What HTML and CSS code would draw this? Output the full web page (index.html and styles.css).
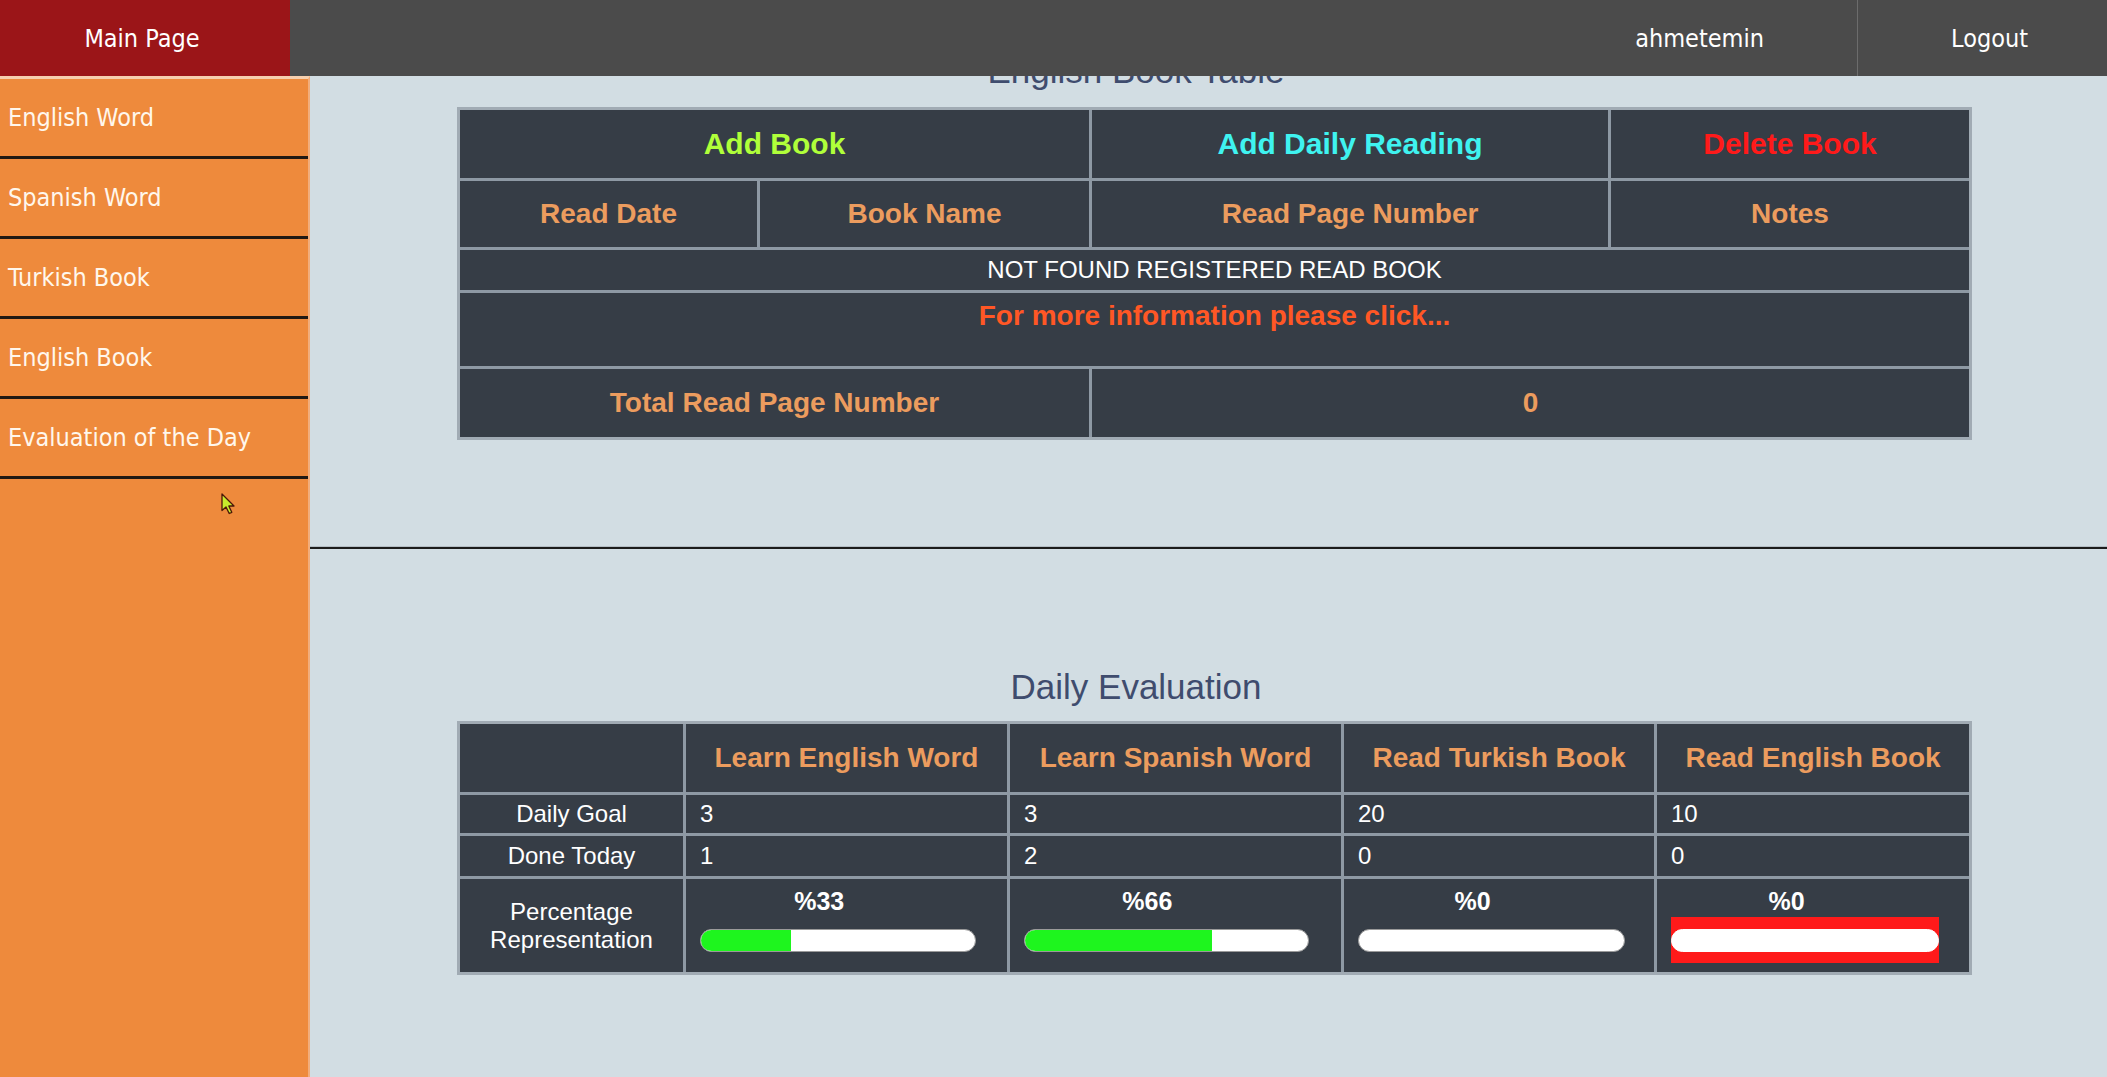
FILE: index.html
```html
<!DOCTYPE html>
<html lang="en">
<head>
<meta charset="utf-8">
<title>English Book Table</title>
<link rel="stylesheet" href="styles.css">
</head>
<body>
<div class="page">
  <header class="topbar">
    <a class="brand" href="#">Main Page</a>
    <div class="spacer"></div>
    <a class="nav-item" href="#">ahmetemin</a>
    <a class="nav-item logout" href="#">Logout</a>
  </header>
  <div class="layout">
    <nav class="sidebar">
      <a class="side-link" href="#">English Word</a>
      <a class="side-link" href="#">Spanish Word</a>
      <a class="side-link" href="#">Turkish Book</a>
      <a class="side-link" href="#">English Book</a>
      <a class="side-link" href="#">Evaluation of the Day</a>
      <svg class="cursor" width="15" height="22" viewBox="0 0 15 22"><path d="M1 1 L1 17.5 L5 14 L8.2 20.5 L10.8 19.3 L7.8 13 L13 13 Z" fill="#c6ec2c" stroke="#4a1808" stroke-width="1.3" stroke-linejoin="round"/></svg>
    </nav>
    <main class="content">
      <h2 class="section-title first">English Book Table</h2>
      <div class="book-table">
        <div class="cell span2 action add">Add Book</div>
        <div class="cell action daily">Add Daily Reading</div>
        <div class="cell action delete">Delete Book</div>
        <div class="cell head">Read Date</div>
        <div class="cell head">Book Name</div>
        <div class="cell head">Read Page Number</div>
        <div class="cell head">Notes</div>
        <div class="cell span4 empty">NOT FOUND REGISTERED READ BOOK</div>
        <div class="cell span4 info">For more information please click...</div>
        <div class="cell span2 head">Total Read Page Number</div>
        <div class="cell span2 head">0</div>
      </div>
      <div class="divider"></div>
      <h2 class="section-title second">Daily Evaluation</h2>
      <div class="eval-table">
        <div class="cell"></div>
        <div class="cell head">Learn English Word</div>
        <div class="cell head">Learn Spanish Word</div>
        <div class="cell head">Read Turkish Book</div>
        <div class="cell head">Read English Book</div>

        <div class="cell rowlabel">Daily Goal</div>
        <div class="cell val">3</div>
        <div class="cell val">3</div>
        <div class="cell val">20</div>
        <div class="cell val">10</div>

        <div class="cell rowlabel">Done Today</div>
        <div class="cell val">1</div>
        <div class="cell val">2</div>
        <div class="cell val">0</div>
        <div class="cell val">0</div>

        <div class="cell rowlabel">Percentage<br>Representation</div>
        <div class="cell pcell">
          <div class="pct">%33</div>
          <div class="meter"><div class="bar"><div class="fill" style="width:33%"></div></div></div>
        </div>
        <div class="cell pcell">
          <div class="pct">%66</div>
          <div class="meter"><div class="bar"><div class="fill" style="width:66%"></div></div></div>
        </div>
        <div class="cell pcell">
          <div class="pct">%0</div>
          <div class="meter"><div class="bar"><div class="fill" style="width:0%"></div></div></div>
        </div>
        <div class="cell pcell">
          <div class="pct">%0</div>
          <div class="meter alert"><div class="bar clean"><div class="fill" style="width:0%"></div></div></div>
        </div>
      </div>
    </main>
  </div>
</div>
</body>
</html>
```
FILE: styles.css
```css
* { box-sizing: border-box; }

html, body {
  margin: 0;
  height: 100%;
}

body {
  background: #d2dde3;
  font-family: "Liberation Sans", Arial, sans-serif;
  overflow: hidden;
}

.page {
  display: flex;
  flex-direction: column;
  height: 100vh;
}

/* ---------- top bar ---------- */
.topbar {
  flex: none;
  display: flex;
  height: 76px;
  background: #4b4b4b;
  font-family: "DejaVu Sans Condensed", "DejaVu Sans", sans-serif;
  font-size: 25px;
}

.brand {
  width: 290px;
  display: flex;
  align-items: center;
  justify-content: center;
  padding-right: 6px;
  background: #9b1518;
  color: #fff;
  text-decoration: none;
}

.spacer { flex: 1; }

.nav-item {
  display: flex;
  align-items: center;
  padding: 0 93px;
  color: #fff;
  text-decoration: none;
}

.nav-item.logout {
  border-left: 1px solid #6c6c6c;
  padding: 0 79px 0 93px;
}

/* ---------- body ---------- */
.layout {
  flex: 1;
  display: flex;
  min-height: 0;
}

.sidebar {
  position: relative;
  flex: none;
  width: 310px;
  background: #ee8a3c;
  border-top: 3px solid #f6cfae;
  border-right: 2px solid #f2ad7b;
  font-family: "DejaVu Sans Condensed", "DejaVu Sans", sans-serif;
}

.side-link {
  display: flex;
  align-items: center;
  height: 80px;
  padding-left: 8px;
  border-bottom: 3px solid #211913;
  color: #fff7ec;
  font-size: 25px;
  text-decoration: none;
}

.cursor {
  position: absolute;
  left: 221px;
  top: 414px;
}

.content {
  flex: 1;
  overflow: hidden;
}

.section-title {
  padding-right: 145px;
  text-align: center;
  font-size: 35px;
  line-height: 40px;
  font-weight: normal;
  color: #3f4c6e;
}

.section-title.first { margin: -25px 0 16px; }
.section-title.second { margin: 118px 0 14px; }

/* ---------- tables ---------- */
.book-table,
.eval-table {
  display: grid;
  width: 1515px;
  margin-left: 147px;
  gap: 3px;
  background: #8e99a4;
  border: 3px solid #a1abb4;
}

.book-table {
  grid-template-columns: 297px 329px 516px 358px;
  grid-template-rows: 68px 66px 40px 73px 68px;
}

.eval-table {
  grid-template-columns: 223px 321px 331px 310px 312px;
  grid-template-rows: 68px 38px 40px 93px;
}

.cell {
  display: flex;
  align-items: center;
  justify-content: center;
  background: #363d46;
  color: #fff;
}

.span2 { grid-column: span 2; }
.span4 { grid-column: span 4; }

.action {
  font-size: 30px;
  font-weight: bold;
}
.action.add { color: #b0ff3a; }
.action.daily { color: #3ff3f0; }
.action.delete { color: #ff1a1a; }

.head {
  font-size: 28px;
  font-weight: bold;
  color: #ec9c5e;
}

.empty {
  font-size: 24px;
}

.info {
  align-items: flex-start;
  padding-top: 7px;
  font-size: 28px;
  line-height: 32px;
  font-weight: bold;
  color: #ff5725;
}

.divider {
  margin-top: 106px;
  height: 3px;
  border-top: 1px solid #b4bdc4;
  background: #1c1c1c;
}

.rowlabel {
  font-size: 24px;
  line-height: 28px;
  text-align: center;
}

.val {
  justify-content: flex-start;
  padding-left: 14px;
  font-size: 24px;
}

.pcell {
  display: block;
  padding-top: 7px;
}

.pct {
  width: 83%;
  text-align: center;
  font-size: 25px;
  line-height: 30px;
  font-weight: bold;
  color: #fff;
}

.meter {
  width: 86%;
  margin: 1px 0 0 14px;
  padding: 12px 0 11px;
}

.meter.alert { background: #ff1a1a; }

.bar {
  height: 23px;
  border-radius: 12px;
  background: #fff;
  border: 1px solid #9a9a9a;
  overflow: hidden;
}

.bar.clean { border-color: #fff; }

.fill {
  height: 100%;
  background: #1ef51e;
}
```
